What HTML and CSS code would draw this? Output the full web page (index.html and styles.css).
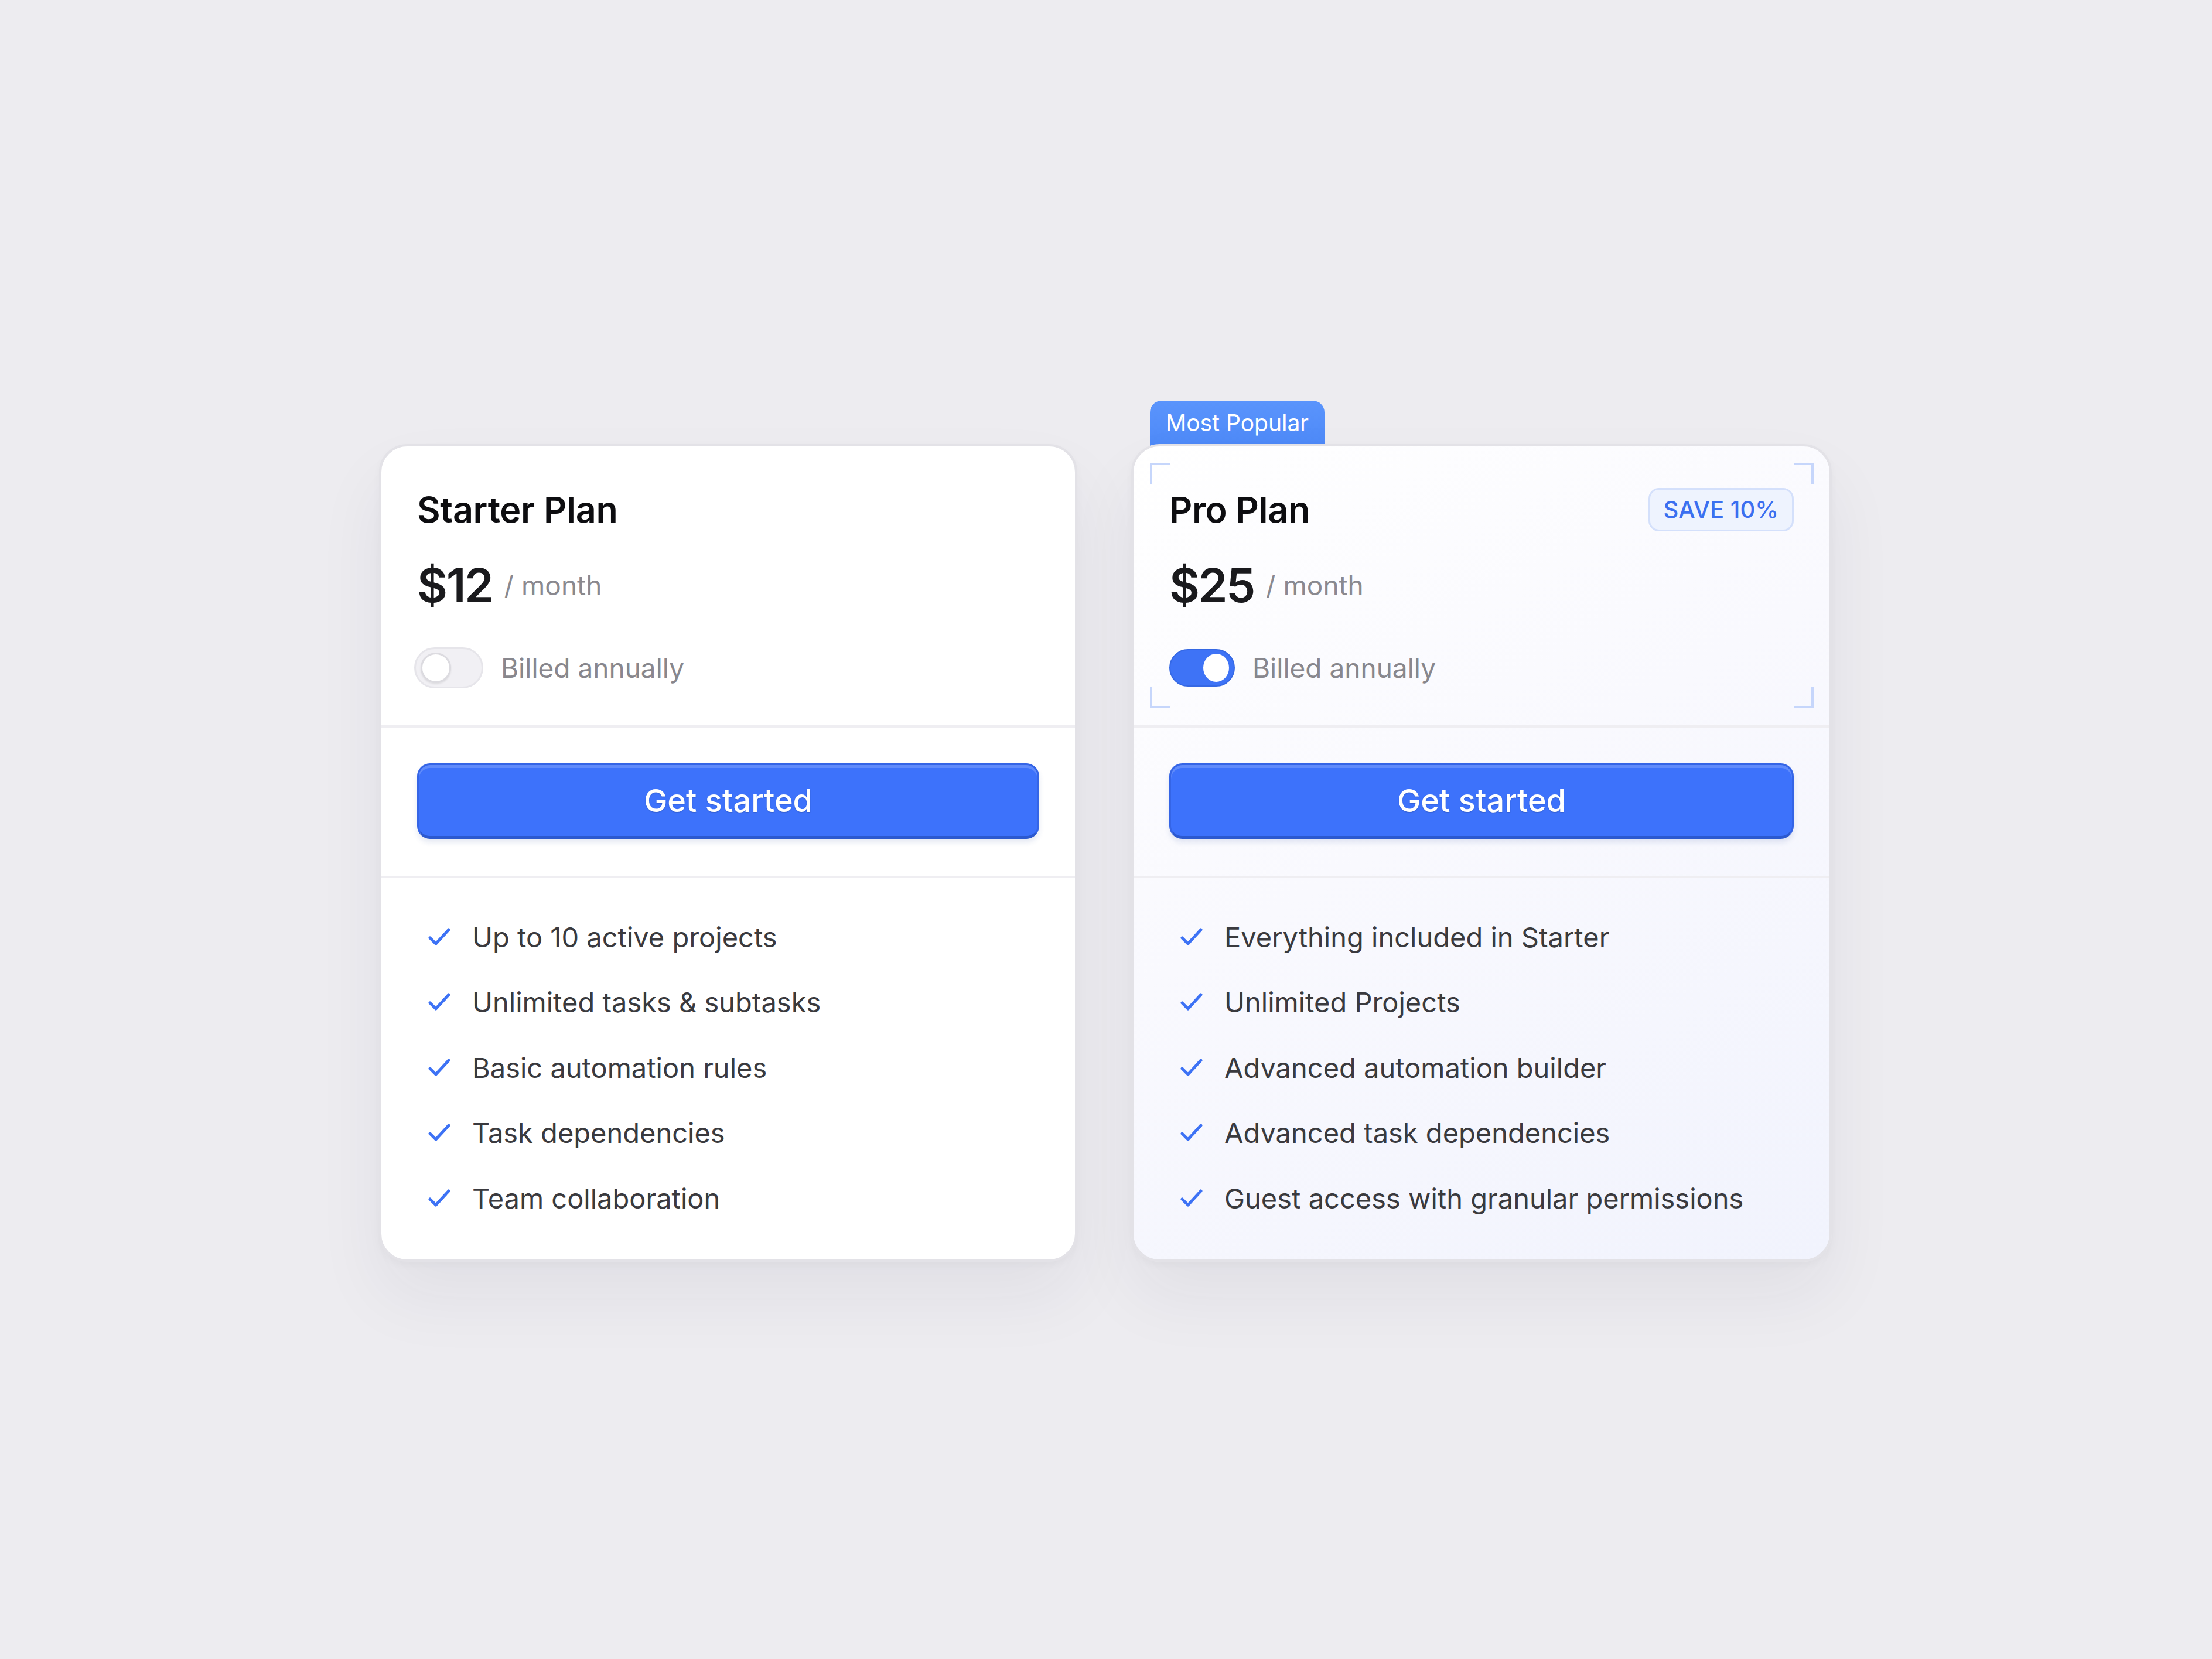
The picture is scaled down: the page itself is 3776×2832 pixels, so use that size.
FILE: index.html
```html
<!DOCTYPE html>
<html lang="en">

<head>
    <meta charset="UTF-8">
    <meta name="viewport" content="width=device-width, initial-scale=1.0">
    <title>Pricing</title>
    <link rel="stylesheet" href="styles.css">
</head>

<body>
    <!-- Pricing plans -->
    <div class="plans">

        <!-- Starter plan -->
        <div class="plan-col plan-col-starter">
            <div class="plan">
                <div class="plan-head">
                    <div class="plan-title-row">
                        <h2 class="plan-title">Starter Plan</h2>
                    </div>
                    <div class="price-row">
                        <span class="price">$12</span>
                        <span class="period">/ month</span>
                    </div>
                    <div class="billing-row">
                        <span class="toggle"><span class="knob"></span></span>
                        <span class="billing-label">Billed annually</span>
                    </div>
                </div>

                <div class="plan-action">
                    <button class="btn-start">Get started</button>
                </div>

                <ul class="features">
                    <li><svg class="check" viewBox="0 0 44 36"><path d="M6 19 L16 29 L38 5" /></svg>Up to 10 active projects</li>
                    <li><svg class="check" viewBox="0 0 44 36"><path d="M6 19 L16 29 L38 5" /></svg>Unlimited tasks &amp; subtasks</li>
                    <li><svg class="check" viewBox="0 0 44 36"><path d="M6 19 L16 29 L38 5" /></svg>Basic automation rules</li>
                    <li><svg class="check" viewBox="0 0 44 36"><path d="M6 19 L16 29 L38 5" /></svg>Task dependencies</li>
                    <li><svg class="check" viewBox="0 0 44 36"><path d="M6 19 L16 29 L38 5" /></svg>Team collaboration</li>
                </ul>
            </div>
        </div>

        <!-- Pro plan -->
        <div class="plan-col">
            <div class="popular-tab">Most Popular</div>
            <div class="plan plan-pro">
                <div class="plan-head">
                    <!-- corner marks around the header -->
                    <span class="corner tl"></span>
                    <span class="corner tr"></span>
                    <span class="corner bl"></span>
                    <span class="corner br"></span>

                    <div class="plan-title-row">
                        <h2 class="plan-title">Pro Plan</h2>
                        <span class="save-badge">SAVE 10%</span>
                    </div>
                    <div class="price-row">
                        <span class="price">$25</span>
                        <span class="period">/ month</span>
                    </div>
                    <div class="billing-row">
                        <span class="toggle on"><span class="knob"></span></span>
                        <span class="billing-label">Billed annually</span>
                    </div>
                </div>

                <div class="plan-action">
                    <button class="btn-start">Get started</button>
                </div>

                <ul class="features">
                    <li><svg class="check" viewBox="0 0 44 36"><path d="M6 19 L16 29 L38 5" /></svg>Everything included in Starter</li>
                    <li><svg class="check" viewBox="0 0 44 36"><path d="M6 19 L16 29 L38 5" /></svg>Unlimited Projects</li>
                    <li><svg class="check" viewBox="0 0 44 36"><path d="M6 19 L16 29 L38 5" /></svg>Advanced automation builder</li>
                    <li><svg class="check" viewBox="0 0 44 36"><path d="M6 19 L16 29 L38 5" /></svg>Advanced task dependencies</li>
                    <li><svg class="check" viewBox="0 0 44 36"><path d="M6 19 L16 29 L38 5" /></svg>Guest access with granular permissions</li>
                </ul>
            </div>
        </div>

    </div>
</body>

</html>
```

FILE: styles.css
```css
/* Page */
body {
    margin: 0;
    min-height: 100vh;
    display: flex;
    align-items: center;
    justify-content: center;
    background-color: #edecf0;
    font-family: Inter, 'Noto Sans', sans-serif;
}

/* Two cards side by side */
.plans {
    display: flex;
    align-items: flex-end;
    gap: 92px;
    margin-left: -2px;
    margin-top: 5px;
}

.plan-col {
    width: 1196px;
    display: flex;
    flex-direction: column;
    align-items: flex-start;
}

.plan-col-starter {
    width: 1192px;
}

/* Card */
.plan {
    position: relative;
    z-index: 1;
    box-sizing: border-box;
    width: 100%;
    background-color: #ffffff;
    border: 4px solid #e3e2e7;
    border-radius: 48px;
    box-shadow: 0 60px 120px rgba(40, 40, 70, 0.06), 0 6px 14px rgba(0, 0, 0, 0.03);
    overflow: hidden;
}

.plan-pro {
    background: linear-gradient(150deg, #ffffff 0%, #f9f9fe 45%, #f1f3fd 100%);
}

/* Most popular tab */
.popular-tab {
    box-sizing: border-box;
    height: 96px;
    margin-left: 32px;
    margin-bottom: -22px;
    padding: 18px 27px 0;
    background: linear-gradient(180deg, #5a94fc, #4b87f7);
    border-radius: 20px 20px 0 0;
    color: #ffffff;
    font-size: 39px;
    line-height: 1;
}

/* Header section */
.plan-head {
    position: relative;
    padding: 71px 61px 63px;
    border-bottom: 4px solid #efeef2;
}

.plan-title-row {
    display: flex;
    align-items: center;
    justify-content: space-between;
    height: 74px;
}

.plan-title {
    margin: 0;
    font-size: 61px;
    line-height: 74px;
    font-weight: 600;
    color: #0d0d10;
    letter-spacing: -0.005em;
}

.save-badge {
    box-sizing: border-box;
    height: 74px;
    padding: 0 23px;
    display: flex;
    align-items: center;
    background-color: #eef3fe;
    border: 3px solid #d4e0fb;
    border-radius: 18px;
    color: #3b6ff0;
    font-size: 40px;
    font-weight: 500;
}

.price-row {
    display: flex;
    align-items: center;
    gap: 20px;
    margin-top: 52px;
    height: 80px;
}

.price {
    font-size: 80px;
    line-height: 1;
    font-weight: 600;
    color: #1a1a1d;
    letter-spacing: -0.03em;
}

.period {
    font-size: 46px;
    line-height: 1;
    color: #8a898f;
}

.billing-row {
    display: flex;
    align-items: center;
    gap: 30px;
    margin-top: 66px;
    height: 70px;
}

.billing-label {
    font-size: 46px;
    line-height: 1;
    color: #88878d;
}

/* Toggle switch */
.toggle {
    box-sizing: border-box;
    width: 118px;
    height: 70px;
    margin-left: -5px;
    padding: 0 8px;
    display: flex;
    align-items: center;
    background-color: #f1f0f4;
    border: 3px solid #e6e5ea;
    border-radius: 35px;
}

.knob {
    box-sizing: border-box;
    width: 52px;
    height: 52px;
    background-color: #ffffff;
    border: 3px solid #dcdbe0;
    border-radius: 50%;
    box-shadow: 0 2px 3px rgba(0, 0, 0, 0.08);
}

.toggle.on {
    width: 112px;
    height: 64px;
    margin-left: 0;
    justify-content: flex-end;
    background-color: #3e73f6;
    border: 2px solid #3568e4;
}

.toggle.on .knob {
    width: 44px;
    height: 48px;
    border: none;
    box-shadow: none;
}

/* Corner marks on the pro header */
.corner {
    position: absolute;
    width: 30px;
    height: 33px;
    border: 0 solid #c6d6fb;
}

.corner.tl {
    top: 28px;
    left: 28px;
    border-top-width: 4px;
    border-left-width: 4px;
}

.corner.tr {
    top: 28px;
    right: 27px;
    border-top-width: 4px;
    border-right-width: 4px;
}

.corner.bl {
    bottom: 29px;
    left: 28px;
    border-bottom-width: 4px;
    border-left-width: 4px;
}

.corner.br {
    bottom: 29px;
    right: 27px;
    border-bottom-width: 4px;
    border-right-width: 4px;
}

/* Button section */
.plan-action {
    padding: 61px 61px 63px;
    border-bottom: 4px solid #efeef2;
}

.btn-start {
    display: block;
    box-sizing: border-box;
    width: 100%;
    height: 129px;
    background-color: #3d72fb;
    border: 3px solid #3565e6;
    border-bottom: 5px solid #2c59cf;
    border-radius: 22px;
    box-shadow: inset 0 5px 0 rgba(255, 255, 255, 0.18), 0 6px 10px rgba(40, 70, 160, 0.12);
    color: #ffffff;
    font-family: Inter, 'Noto Sans', sans-serif;
    font-size: 54px;
    font-weight: 500;
    text-shadow: 0 1px 2px rgba(0, 0, 0, 0.2);
}

/* Feature list */
.features {
    list-style: none;
    margin: 0;
    padding: 73px 61px 76px 77px;
    display: flex;
    flex-direction: column;
    gap: 55.5px;
}

.features li {
    display: flex;
    align-items: center;
    gap: 34px;
    font-size: 47px;
    line-height: 56px;
    color: #3a3a3e;
}

.check {
    width: 44px;
    height: 36px;
    flex-shrink: 0;
}

.check path {
    fill: none;
    stroke: #3d72f5;
    stroke-width: 5;
    stroke-linecap: round;
    stroke-linejoin: round;
}
```
